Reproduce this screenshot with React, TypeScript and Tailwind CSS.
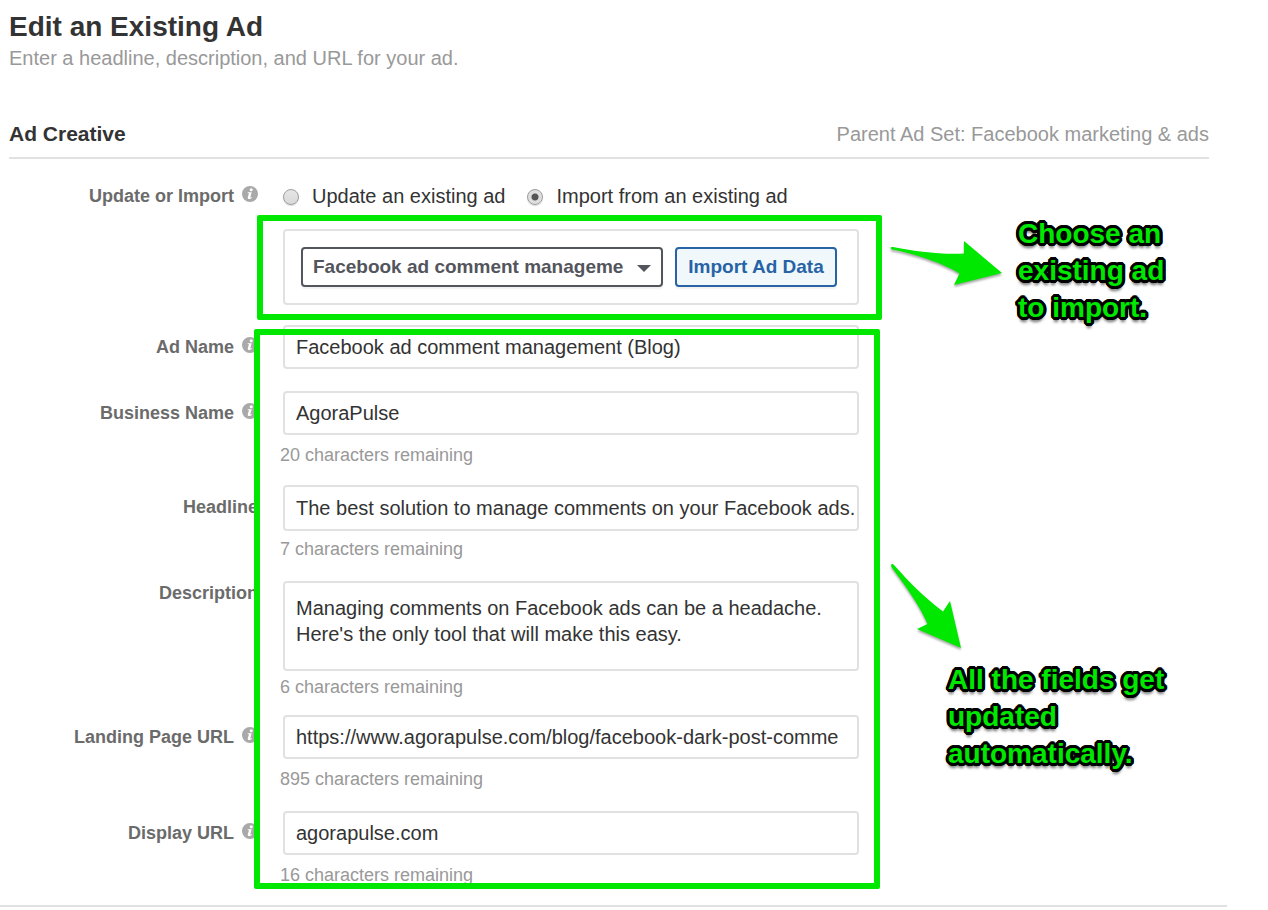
import { useState } from "react";
import type { ReactNode } from "react";

type FieldData = {
  id: string;
  label: string;
  value: string;
  info?: boolean;
  multiline?: boolean;
  remaining?: number;
  // field height and spacing differ slightly per row
  fieldClass: string;
  hintClass?: string;
};

const fields: FieldData[] = [
  {
    id: "ad-name",
    label: "Ad Name",
    value: "Facebook ad comment management (Blog)",
    info: true,
    fieldClass: "h-11",
  },
  {
    id: "business-name",
    label: "Business Name",
    value: "AgoraPulse",
    info: true,
    remaining: 20,
    fieldClass: "h-11",
    hintClass: "mt-2 mb-[18px]",
  },
  {
    id: "headline",
    label: "Headline",
    value: "The best solution to manage comments on your Facebook ads.",
    remaining: 7,
    fieldClass: "h-[46px]",
    hintClass: "mt-[6px] mb-5",
  },
  {
    id: "description",
    label: "Description",
    value:
      "Managing comments on Facebook ads can be a headache.\nHere's the only tool that will make this easy.",
    multiline: true,
    remaining: 6,
    fieldClass: "h-[90px]",
    hintClass: "mt-1 mb-4",
  },
  {
    id: "landing-url",
    label: "Landing Page URL",
    value: "https://www.agorapulse.com/blog/facebook-dark-post-comme",
    info: true,
    remaining: 895,
    fieldClass: "h-11",
    hintClass: "mt-2 mb-5",
  },
  {
    id: "display-url",
    label: "Display URL",
    value: "agorapulse.com",
    info: true,
    remaining: 16,
    fieldClass: "h-11",
    hintClass: "mt-2",
  },
];

function InfoIcon() {
  return (
    <svg viewBox="0 0 16 16" className="mb-1 size-4 shrink-0" aria-hidden="true">
      <circle cx="8" cy="8" r="8" fill="#a9a9a9" />
      <circle cx="9.200" cy="3.700" r="1.500" fill="#fff" />
      <path
        d="M5.700 6.300h4L8.300 11.200c-.1.500.2.500.5.300l.8-.6.4.5c-.9 1.100-1.800 1.700-2.900 1.700-1.100 0-1.600-.7-1.300-1.800l1-3.600c.1-.4 0-.6-.4-.6h-.8z"
        fill="#fff"
      />
    </svg>
  );
}

function Callout({ className, children }: { className: string; children: ReactNode }) {
  return (
    <p
      className={`absolute text-[28px] leading-[37px] font-bold text-[#00e800] [text-shadow:3px_0_#000,-3px_0_#000,0_3px_#000,0_-3px_#000,2px_2px_#000,-2px_2px_#000,2px_-2px_#000,-2px_-2px_#000,3px_1px_#000,-3px_1px_#000,3px_-1px_#000,-3px_-1px_#000,1px_3px_#000,-1px_3px_#000,1px_-3px_#000,-1px_-3px_#000,0_5px_3px_rgba(0,0,0,0.6)] ${className}`}
    >
      {children}
    </p>
  );
}

function Field({ field }: { field: FieldData }) {
  const [value, setValue] = useState(field.value);
  const control =
    "block w-full rounded-sm border-2 border-[#e1e1e1] bg-white pl-[11px] text-xl text-[#333] outline-none";

  return (
    <div className="flex">
      <div
        className={`flex w-[249px] shrink-0 items-center justify-end gap-2 ${
          field.multiline ? "h-6" : "h-11"
        }`}
      >
        <label htmlFor={field.id} className="text-lg font-bold text-[#6b6b6b]">
          {field.label}
        </label>
        {field.info && <InfoIcon />}
      </div>
      <div className="ml-[25px] w-full max-w-[576px]">
        {field.multiline ? (
          <textarea
            id={field.id}
            value={value}
            onChange={(e) => setValue(e.target.value)}
            className={`${control} ${field.fieldClass} resize-none overflow-hidden pt-3 leading-[26px]`}
          />
        ) : (
          <input
            id={field.id}
            type="text"
            value={value}
            onChange={(e) => setValue(e.target.value)}
            className={`${control} ${field.fieldClass}`}
          />
        )}
        {field.remaining !== undefined && (
          <p className={`-ml-[3px] h-6 text-lg leading-6 text-[#999] ${field.hintClass}`}>
            {field.remaining} characters remaining
          </p>
        )}
      </div>
    </div>
  );
}

function ModeRadio({
  id,
  label,
  checked,
  onSelect,
}: {
  id: string;
  label: string;
  checked: boolean;
  onSelect: () => void;
}) {
  return (
    <div className="flex items-center gap-[13px]">
      <input
        id={id}
        type="radio"
        name="mode"
        checked={checked}
        onChange={onSelect}
        className="mt-[2px] size-4 appearance-none rounded-full border border-[#9d9d9d] bg-linear-to-b from-[#e6e6e6] to-[#d9d9d9] shadow-[0_1px_1px_rgba(0,0,0,0.15)] checked:bg-[radial-gradient(circle,#555_0_3px,#dedede_4px)]"
      />
      <label htmlFor={id} className="text-xl leading-6 text-[#333]">
        {label}
      </label>
    </div>
  );
}

export default function App() {
  const [mode, setMode] = useState("import");

  return (
    <main className="bg-white font-['Liberation_Sans',Arial,sans-serif] text-[#333]">
      <div className="pt-[9px] pr-[59px] pl-[9px]">
        <h1 className="text-[28px] leading-9 font-bold">Edit an Existing Ad</h1>
        <p className="text-xl leading-[26px] text-[#999]">
          Enter a headline, description, and URL for your ad.
        </p>

        <div className="mt-12 flex h-10 items-start justify-between border-b-2 border-[#e1e1e1] pt-[3px]">
          <h2 className="text-[21px] leading-6 font-bold">Ad Creative</h2>
          <p className="text-xl leading-6 text-[#999]">Parent Ad Set: Facebook marketing &amp; ads</p>
        </div>

        <form onSubmit={(e) => e.preventDefault()}>
          {/* Mode */}
          <div className="mt-[25px] flex h-6 items-center">
            <div className="flex w-[249px] shrink-0 items-center justify-end gap-2">
              <span className="text-lg font-bold text-[#6b6b6b]">Update or Import</span>
              <InfoIcon />
            </div>
            <div className="ml-[25px] flex gap-[22px]">
              <ModeRadio
                id="mode-update"
                label="Update an existing ad"
                checked={mode === "update"}
                onSelect={() => setMode("update")}
              />
              <ModeRadio
                id="mode-import"
                label="Import from an existing ad"
                checked={mode === "import"}
                onSelect={() => setMode("import")}
              />
            </div>
          </div>

          {/* Import panel */}
          <div className="relative mt-[21px] ml-[274px] flex h-[76px] max-w-[576px] items-center gap-3 rounded-sm border-2 border-[#e1e1e1] px-4">
            <div className="relative w-[362px]">
              <select
                aria-label="Existing ad"
                className="h-10 w-full appearance-none rounded-sm border-2 border-[#53555c] bg-white pr-8 pl-[10px] text-[19px] font-bold text-[#53555c] shadow-[0_2px_2px_rgba(0,0,0,0.06)]"
              >
                <option>Facebook ad comment manageme</option>
              </select>
              <svg
                viewBox="0 0 14 7"
                className="pointer-events-none absolute top-[18px] right-3 h-[7px] w-[14px]"
                aria-hidden="true"
              >
                <path d="M0 0h14L7 7z" fill="#53555c" />
              </svg>
            </div>
            <button
              type="submit"
              className="h-10 w-[162px] rounded-sm border-2 border-[#2763a5] bg-[#f0f8fc] text-[19px] font-bold whitespace-nowrap text-[#2763a5] shadow-[0_2px_2px_rgba(0,0,0,0.06)]"
            >
              Import Ad Data
            </button>

            {/* Import highlight */}
            <div className="pointer-events-none absolute -top-4 -right-[25px] -bottom-[17px] -left-7 rounded-xs border-6 border-[#00e800]" />
            <svg
              viewBox="0 0 116 50"
              className="absolute top-[10px] left-[603px] h-[50px] w-[116px] drop-shadow-[0_2px_1px_rgba(0,0,0,0.35)]"
              aria-hidden="true"
            >
              <path
                d="M4 8.500C2 8 2 5.500 5 6C25 10 55 14 76 12.500L76 0L114 32L66 44L71.500 32.500C55 22 25 12.500 4 8.500Z"
                fill="#00e800"
              />
            </svg>
            <Callout className="-top-4 left-[733px] w-[160px]">
              Choose an existing ad to import.
            </Callout>
          </div>

          {/* Ad fields */}
          <div className="relative mt-5">
            <Field field={fields[0]} />
            <div className="mt-[22px]">
              {fields.slice(1).map((field) => (
                <Field key={field.id} field={field} />
              ))}
            </div>

            {/* Fields highlight */}
            <div className="pointer-events-none absolute top-1 -bottom-[2px] left-[245px] w-[626px] rounded-xs border-6 border-[#00e800]" />
            <svg
              viewBox="0 0 74 88"
              className="absolute top-[238px] left-[880px] h-[88px] w-[74px] drop-shadow-[0_2px_1px_rgba(0,0,0,0.35)]"
              aria-hidden="true"
            >
              <path
                d="M2.500 4C1 1.500 3.500 0 5 2C20 19 37 36 54 48.500L61 38L72 85L28 66L38.500 61C31 43 17 24 2.500 4Z"
                fill="#00e800"
              />
            </svg>
            <Callout className="top-[336px] left-[939px] w-[240px]">
              All the fields get updated automatically.
            </Callout>
          </div>
        </form>
      </div>
      <hr className="mt-[18px] mr-[41px] border-t-2 border-[#e1e1e1]" />
    </main>
  );
}
